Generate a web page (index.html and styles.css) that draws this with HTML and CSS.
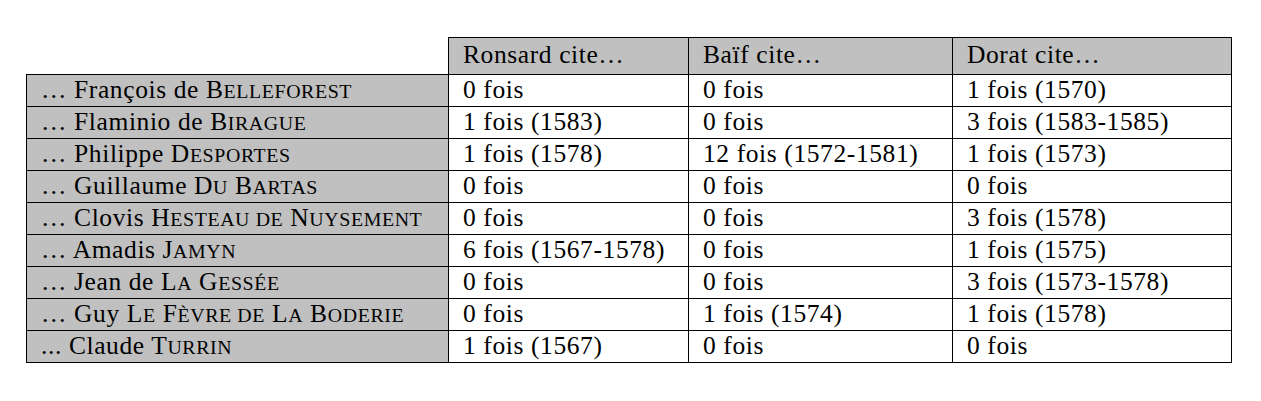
FILE: index.html
```html
<!DOCTYPE html>
<html lang="fr">
<head>
<meta charset="utf-8">
<title>Citations</title>
<link rel="stylesheet" href="styles.css">
</head>
<body>
<div class="page">
<table class="cites">
  <colgroup>
    <col class="c-name">
    <col class="c-a">
    <col class="c-b">
    <col class="c-c">
  </colgroup>
  <thead>
    <tr>
      <th class="blank"></th>
      <th>Ronsard cite…</th>
      <th>Baïf cite…</th>
      <th>Dorat cite…</th>
    </tr>
  </thead>
  <tbody>
    <tr><th>… François de B<span class="lc">elleforest</span></th><td>0 fois</td><td>0 fois</td><td>1 fois (1570)</td></tr>
    <tr><th>… Flaminio de B<span class="lc">irague</span></th><td>1 fois (1583)</td><td>0 fois</td><td>3 fois (1583-1585)</td></tr>
    <tr><th>… Philippe D<span class="lc">esportes</span></th><td>1 fois (1578)</td><td>12 fois (1572-1581)</td><td>1 fois (1573)</td></tr>
    <tr><th>… Guillaume D<span class="lc">u</span> B<span class="lc">artas</span></th><td>0 fois</td><td>0 fois</td><td>0 fois</td></tr>
    <tr><th>… Clovis H<span class="lc">esteau de</span> N<span class="lc">uysement</span></th><td>0 fois</td><td>0 fois</td><td>3 fois (1578)</td></tr>
    <tr><th>… Amadis J<span class="lc">amyn</span></th><td>6 fois (1567-1578)</td><td>0 fois</td><td>1 fois (1575)</td></tr>
    <tr><th>… Jean de L<span class="lc">a</span> G<span class="lc">essée</span></th><td>0 fois</td><td>0 fois</td><td>3 fois (1573-1578)</td></tr>
    <tr><th>… Guy L<span class="lc">e</span> F<span class="lc">èvre de</span> L<span class="lc">a</span> B<span class="lc">oderie</span></th><td>0 fois</td><td>1 fois (1574)</td><td>1 fois (1578)</td></tr>
    <tr><th>... Claude T<span class="lc">urrin</span></th><td>1 fois (1567)</td><td>0 fois</td><td>0 fois</td></tr>
  </tbody>
</table>
</div>
</body>
</html>
```

FILE: styles.css
```css
html, body {
  margin: 0;
  padding: 0;
  background: #ffffff;
}

.page {
  padding: 37px 0 0 26px;
}

.cites {
  border-collapse: collapse;
  table-layout: fixed;
  width: 1205px;
  font-family: "Liberation Serif", "Times New Roman", serif;
  font-size: 25.5px;
  letter-spacing: 0.6px;
  color: #000000;
}

.c-name { width: 422px; }
.c-a { width: 240px; }
.c-b { width: 264px; }
.c-c { width: 279px; }

.cites th,
.cites td {
  border: 1px solid #000000;
  padding: 0 8px 2px 14px;
  line-height: 29px;
  height: 29px;
  text-align: left;
  vertical-align: top;
  font-weight: normal;
  white-space: nowrap;
}

.cites thead th {
  background: #c0c0c0;
  padding-top: 2px;
  padding-bottom: 5px;
}

.cites thead th.blank {
  background: transparent;
  border: none;
}

.cites tbody th {
  background: #c0c0c0;
}

/* small capitals: lowercase letters drawn as reduced capitals */
.lc {
  text-transform: uppercase;
  font-size: 0.78em;
  line-height: 1;
}
```
